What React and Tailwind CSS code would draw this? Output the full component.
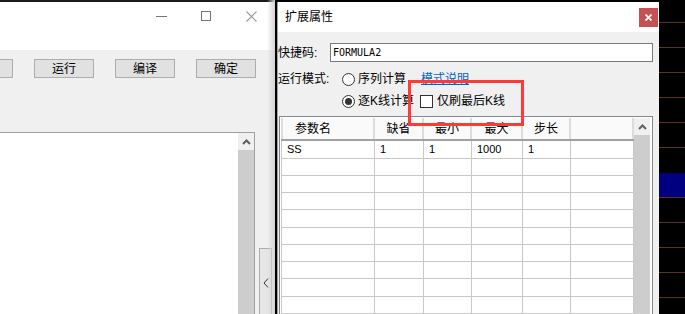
import React from "react";

const FONT = { fontFamily: '"Liberation Sans","Noto Sans CJK SC",sans-serif' };

function Chevron({ className = "" }) {
  return (
    <svg width="9" height="6" viewBox="0 0 9 6" className={className}>
      <polyline points="1,5 4.5,1.5 8,5" fill="none" stroke="#606060" strokeWidth="2" />
    </svg>
  );
}

function LeftWindow() {
  return (
    <div className="relative w-[275px] h-full flex flex-col bg-[#f0f0f0] overflow-hidden">
      <div className="h-[2px] bg-[#1a1a1a] shrink-0" />
      <div className="h-[48px] bg-white shrink-0 relative">
        <div className="absolute left-[156px] top-[14px] w-[11px] h-px bg-[#777]" />
        <div className="absolute left-[201px] top-[9px] w-[10px] h-[10px] border border-[#777]" />
        <svg className="absolute left-[246px] top-[9px]" width="11" height="11" viewBox="0 0 11 11">
          <path d="M0.5 0.5 L10.5 10.5 M10.5 0.5 L0.5 10.5" stroke="#999" strokeWidth="1.1" />
        </svg>
      </div>
      <div className="flex items-start mt-[9px] h-[19px] shrink-0">
        <div className="w-[13px] h-[19px] border border-[#adadad] border-l-0 bg-[#e1e1e1]" />
        <div className="ml-[21px] w-[60px] h-[19px] border border-[#adadad] bg-[#e1e1e1] flex items-center justify-center text-[12px] text-black">运行</div>
        <div className="ml-[21px] w-[60px] h-[19px] border border-[#adadad] bg-[#e1e1e1] flex items-center justify-center text-[12px] text-black">编译</div>
        <div className="ml-[21px] w-[60px] h-[19px] border border-[#adadad] bg-[#e1e1e1] flex items-center justify-center text-[12px] text-black">确定</div>
      </div>
      <div className="flex flex-1 mt-[54px] items-start">
        <div className="w-[255px] h-[200px] bg-white border-t border-r border-[#a0a0a0] flex justify-end">
          <div className="w-[16px] flex flex-col">
            <div className="h-[17px] bg-[#f0f0f0] flex items-center justify-center">
              <Chevron />
            </div>
            <div className="flex-1 bg-[#cdcdcd] h-[170px]" />
          </div>
        </div>
        <div className="ml-[4px] mt-[116px] w-[13px] h-[80px] bg-[#e6e6e6] border border-[#adadad] flex items-start justify-center pt-[29px]">
          <svg width="6" height="10" viewBox="0 0 6 10">
            <polyline points="5,0.5 1,5 5,9.5" fill="none" stroke="#333" strokeWidth="1" />
          </svg>
        </div>
      </div>
      <div className="absolute right-0 top-0 w-[8px] h-full bg-gradient-to-r from-transparent to-[#d4d4d4] pointer-events-none" />
    </div>
  );
}

function Radio({ checked }) {
  return (
    <div className="w-[13px] h-[13px] rounded-full border border-[#333] bg-white flex items-center justify-center">
      {checked && <div className="w-[7px] h-[7px] rounded-full bg-[#333]" />}
    </div>
  );
}

const COLS = [94, 49, 48, 51, 48, 63];

function Table() {
  const headers = ["参数名", "缺省", "最小", "最大", "步长", ""];
  const row1 = ["SS", "1", "1", "1000", "1", ""];
  const rows = Array.from({ length: 10 }, (_, i) => (i === 0 ? row1 : ["", "", "", "", "", ""]));
  return (
    <div className="ml-[1px] mt-[4px] w-[374px] h-[200px] border border-[#828790] bg-white p-px flex">
      <div className="w-[353px] flex flex-col">
        <div className="grid grid-cols-[94px_49px_48px_51px_48px_63px] h-[24px] border-b-2 border-[#a0a0a0] bg-[#fafafa]">
          {headers.map((h, i) => (
            <div
              key={i}
              className={
                "h-full border-r-2 border-[#dcdcdc] flex items-center text-[12px] text-black " +
                (i === 0 ? "pl-[12px] border-l-2" : "justify-center")
              }
            >
              {h}
            </div>
          ))}
        </div>
        {rows.map((r, ri) => (
          <div key={ri} className="grid grid-cols-[94px_49px_48px_51px_48px_63px] h-[18px]">
            {r.map((c, ci) => (
              <div
                key={ci}
                className={
                  "h-full border-r border-b border-[#c8c8c8] flex items-center pl-[5px] text-[11px] text-black " +
                  (ci === 0 ? "border-l" : "")
                }
              >
                {c}
              </div>
            ))}
          </div>
        ))}
      </div>
      <div className="w-[17px] flex flex-col pr-px">
        <div className="h-[17px] bg-[#f0f0f0] flex items-center justify-center">
          <Chevron />
        </div>
        <div className="flex-1 bg-[#cdcdcd]" />
      </div>
    </div>
  );
}

function Dialog() {
  return (
    <div className="w-[382px] h-full flex flex-col pt-[2px] bg-black">
      <div className="flex-1 flex flex-col bg-[#f0f0f0] border-l border-[#a0a0a0] overflow-hidden">
        <div className="h-[30px] bg-white shrink-0 flex items-center justify-between pl-[7px] pr-px">
          <span className="text-[12px] text-black">扩展属性</span>
          <div className="w-[19px] h-[19px] bg-[#c75050] flex items-center justify-center">
            <svg width="7" height="7" viewBox="0 0 7 7">
              <path d="M0.5 0.5 L6.5 6.5 M6.5 0.5 L0.5 6.5" stroke="white" strokeWidth="1.8" />
            </svg>
          </div>
        </div>
        <div className="flex items-center mt-[11px] h-[19px] shrink-0">
          <div className="w-[52px] text-[12px] text-black">快捷码:</div>
          <div className="w-[323px] h-[19px] bg-white border border-[#7a7a7a] flex items-center pl-[2px] text-[10px] text-black" style={{ fontFamily: '"DejaVu Sans Mono",monospace' }}>
            FORMULA2
          </div>
        </div>
        <div className="flex items-center mt-[6px] h-[22px] shrink-0">
          <div className="w-[64px] text-[12px] text-black">运行模式:</div>
          <div className="w-[79px] flex items-center gap-[3px]">
            <Radio />
            <span className="text-[12px] text-black">序列计算</span>
          </div>
          <span className="text-[12px] text-[#0066cc] underline">模式说明</span>
        </div>
        <div className="flex items-center h-[22px] shrink-0">
          <div className="w-[64px]" />
          <div className="w-[78px] flex items-center gap-[3px]">
            <Radio checked />
            <span className="text-[12px] text-black whitespace-nowrap">逐K线计算</span>
          </div>
          <div className="flex items-center gap-[4px]">
            <div className="w-[13px] h-[13px] border border-[#333] bg-white" />
            <span className="text-[12px] text-black">仅刷最后K线</span>
          </div>
        </div>
        <Table />
      </div>
    </div>
  );
}

function RightStrip() {
  const lines = [22, 47, 72, 97, 122, 147, 197, 222, 247, 272, 297];
  return (
    <div className="relative w-[26px] h-full bg-black">
      {lines.map((y) => (
        <div key={y} className="absolute left-0 w-full h-px bg-[#5a3322]" style={{ top: y }} />
      ))}
      <div className="absolute left-0 top-[173px] w-full h-[24px] bg-[#000080]" />
    </div>
  );
}

export default function App() {
  return (
    <div className="relative w-[685px] h-[314px] bg-black flex overflow-hidden" style={FONT}>
      <LeftWindow />
      <div className="w-[2px] h-full bg-black" />
      <Dialog />
      <RightStrip />
      <div className="absolute left-[408px] top-[80px] w-[116px] h-[46px] border-[3px] border-[#ff3838] pointer-events-none" />
    </div>
  );
}
